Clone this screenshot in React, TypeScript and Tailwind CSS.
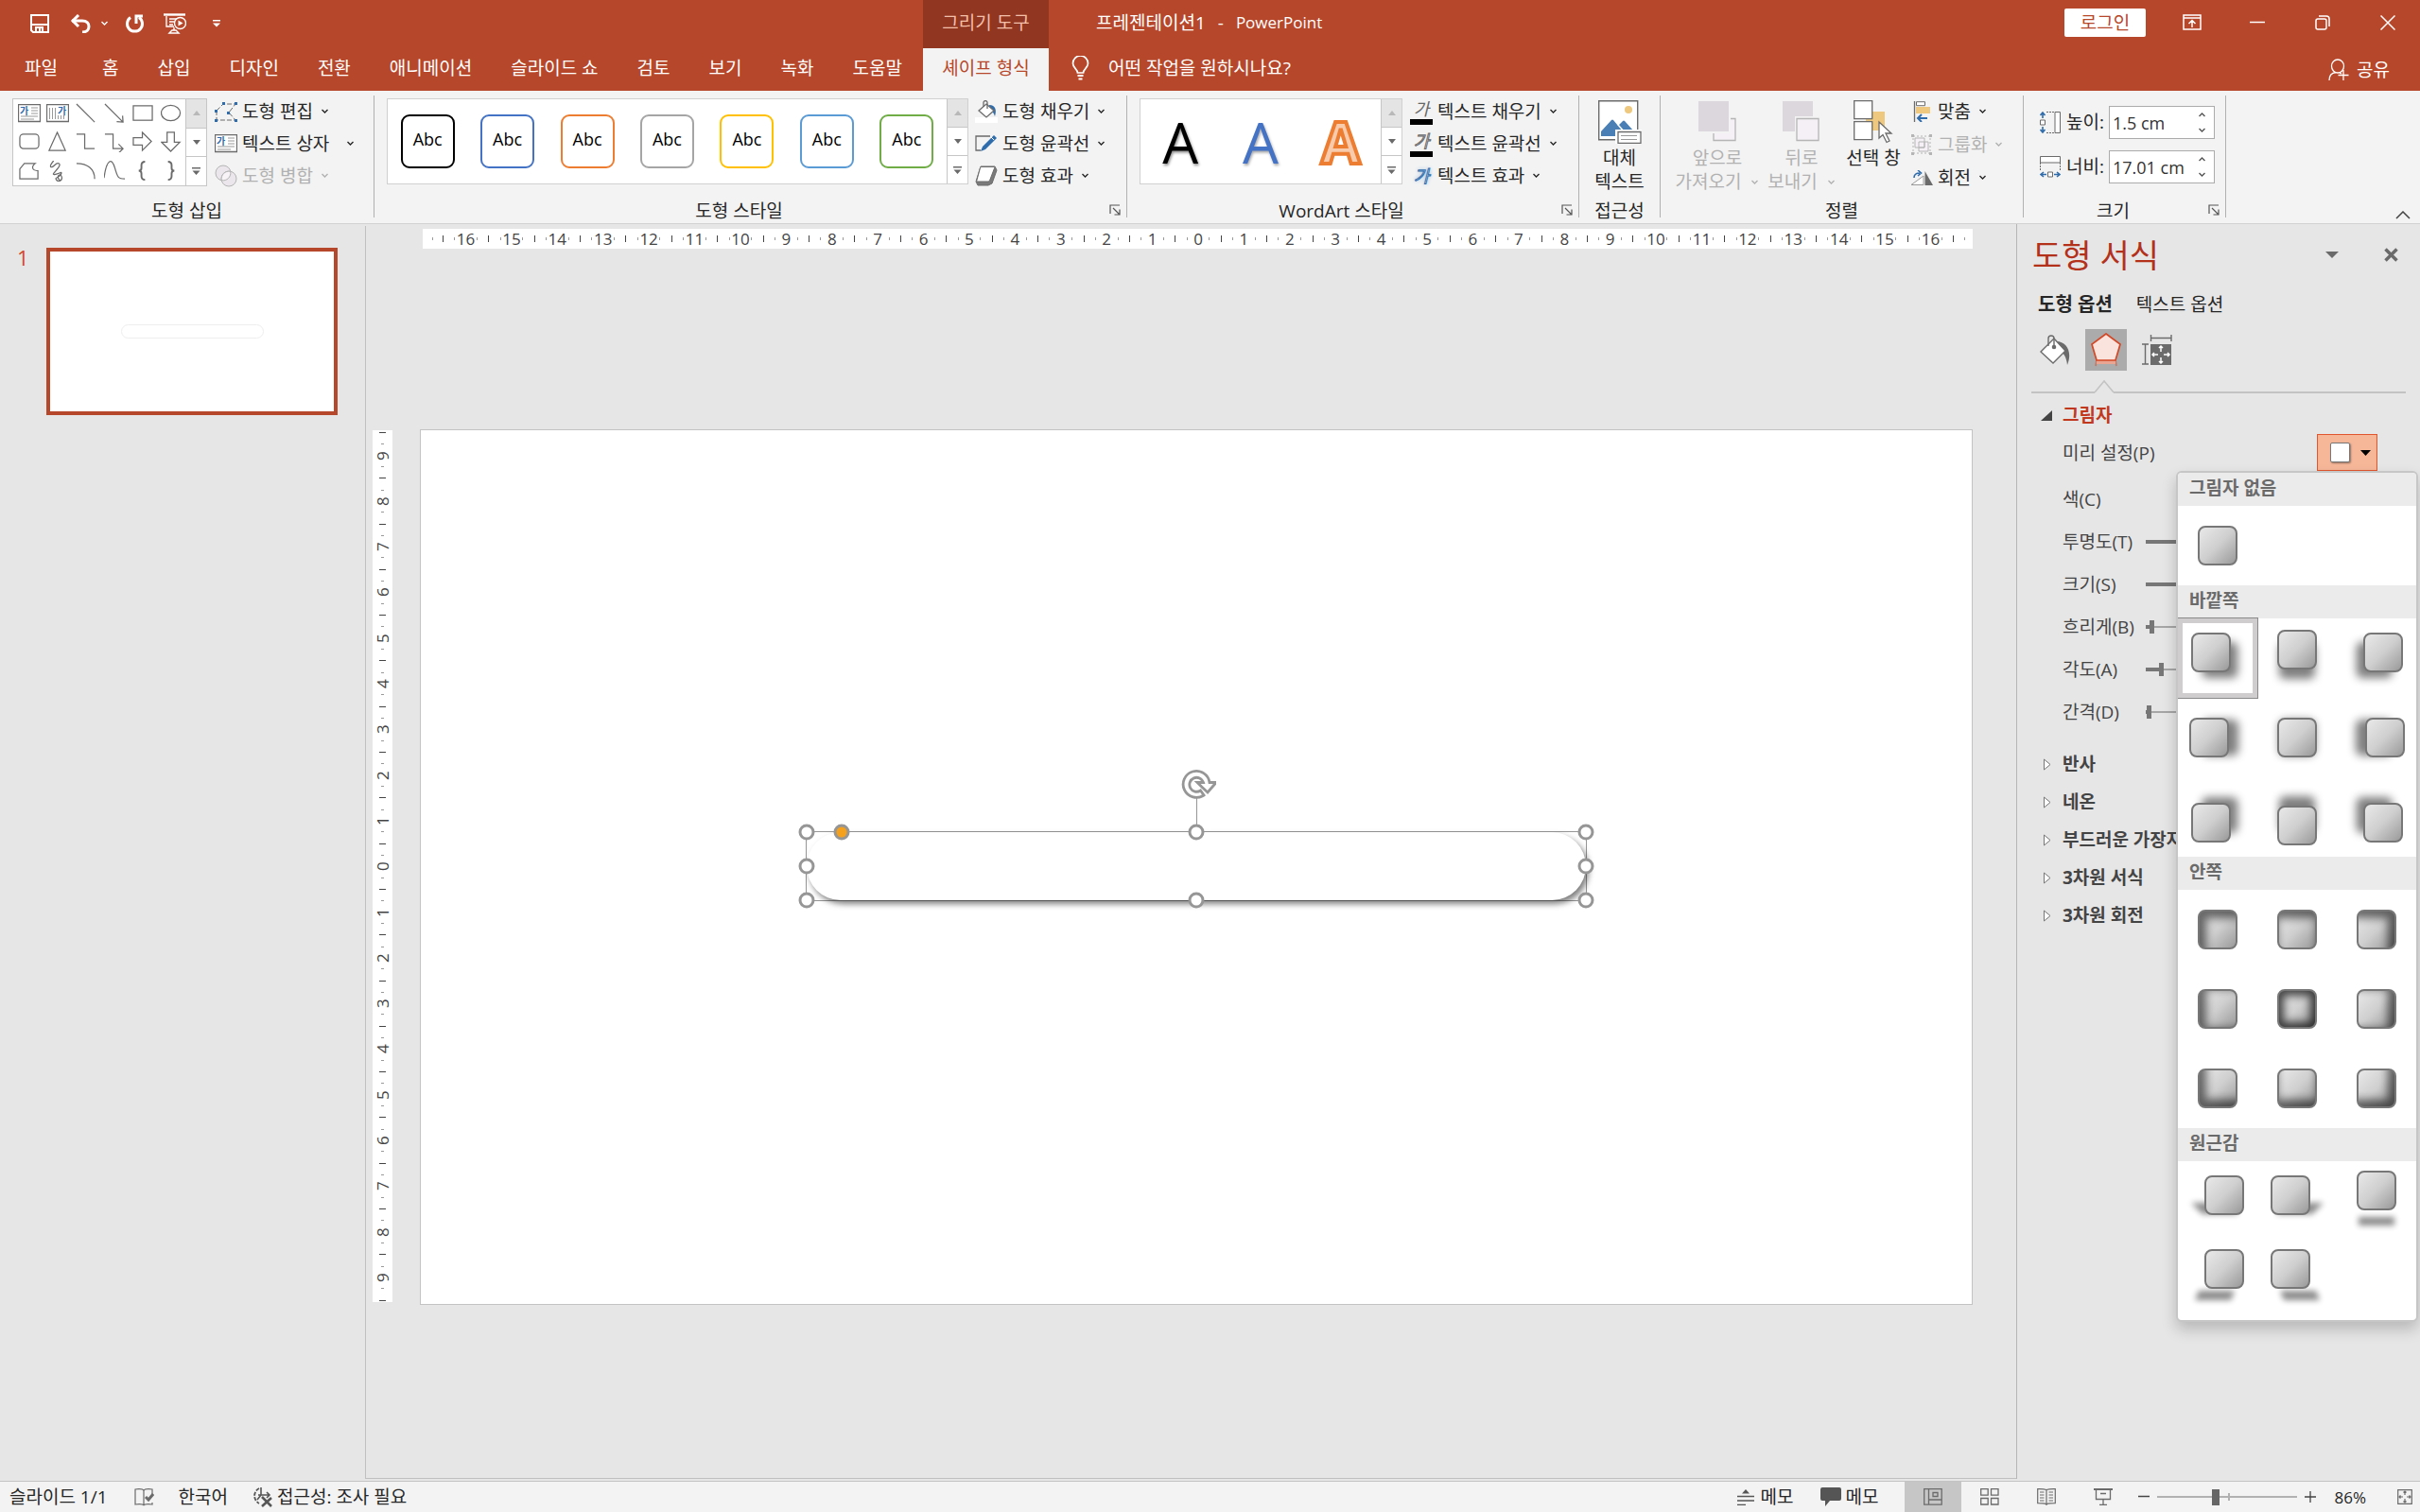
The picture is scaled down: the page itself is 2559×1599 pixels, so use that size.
import type { ReactNode } from "react"
import clsx from "clsx"

const TABS = ["홈", "삽입", "디자인", "전환", "애니메이션", "슬라이드 쇼", "검토", "보기", "녹화", "도움말"]

const STYLE_BORDERS = [
    "border-black",
    "border-[#4472c4]",
    "border-[#ed7d31]",
    "border-[#a5a5a5]",
    "border-[#ffc000]",
    "border-[#5b9bd5]",
    "border-[#70ad47]",
]

function Chevron({ className }: { className?: string }) {
    return (
        <svg width="9" height="6" viewBox="0 0 9 6" className={clsx("shrink-0", className)} fill="none" stroke="currentColor" strokeWidth="1.4">
            <path d="M1.500 1l3 3 3-3" />
        </svg>
    )
}

/* ---------- Title bar ---------- */

function QuickAccess() {
    return (
        <div className="flex w-[976px] items-center pb-0.5 pl-8 text-white">
            <button aria-label="저장" className="mr-[22px]">
                <svg width="20" height="20" viewBox="0 0 20 20" fill="none" stroke="currentColor" strokeWidth="2">
                    <path d="M1 1h18v18H3l-2-2z" />
                    <path d="M1 11h18" />
                    <path d="M6 19v-5h7v5M10 15v4" />
                </svg>
            </button>
            <button aria-label="실행 취소" className="mr-2.5">
                <svg width="22" height="20" viewBox="0 0 22 20" fill="none" stroke="currentColor" strokeWidth="3">
                    <path d="M2 7h11c5 0 7 3 7 6s-2 6-7 6" />
                    <path d="M9 1L3 7l6 6" />
                </svg>
            </button>
            <button aria-label="실행 취소 목록" className="mr-[17px]">
                <Chevron />
            </button>
            <button aria-label="다시 실행" className="mr-5">
                <svg width="21" height="20" viewBox="0 0 21 20" fill="none" stroke="currentColor" strokeWidth="3">
                    <path d="M6 3.500a8 8 0 1 0 9 0" />
                    <path d="M12 10V2h7" />
                </svg>
            </button>
            <button aria-label="슬라이드 쇼" className="mr-7">
                <svg width="24" height="22" viewBox="0 0 24 22" fill="none" stroke="currentColor" strokeWidth="1.4">
                    <path d="M0 1.500h23" strokeWidth="2.4" />
                    <path d="M3 3v11h8M6 6h8M6 9h5M6 12h4M11 15v3M6 21l3-3h4l3 3z" />
                    <circle cx="17.500" cy="10.500" r="6" />
                    <path d="M15.500 7.500l5 3-5 3z" fill="currentColor" stroke="none" />
                </svg>
            </button>
            <button aria-label="빠른 실행 도구 모음 사용자 지정">
                <svg width="8" height="8" viewBox="0 0 8 8" fill="currentColor">
                    <path d="M0 0h8v1.500H0zM0 3.500h8L4 7.500z" />
                </svg>
            </button>
        </div>
    )
}

function TitleBar() {
    return (
        <header className="flex h-[51px] text-[19px] leading-6 text-white">
            <QuickAccess />
            <div className="flex w-[133px] items-center justify-center bg-[#903621] pb-1 text-[#f4bfa9]">그리기 도구</div>
            <div className="flex items-center gap-[13px] pb-1 pl-[50px]">
                <span>프레젠테이션1</span>
                <span>-</span>
                <span className="text-[17px]">PowerPoint</span>
            </div>
            <div className="ml-auto flex items-center pb-1">
                <button className="mr-[14px] h-[30px] w-[86px] rounded-xs bg-white text-[#b7472a]">로그인</button>
                <button aria-label="리본 메뉴 표시 옵션" className="flex w-[69px] justify-center">
                    <svg width="20" height="17" viewBox="0 0 20 17" fill="none" stroke="currentColor" strokeWidth="1.5">
                        <path d="M1 1h18v15H1zM1 4h18M10 14V7M6.500 10L10 6.500l3.500 3.500" />
                    </svg>
                </button>
                <button aria-label="최소화" className="flex w-[69px] justify-center">
                    <svg width="16" height="16" viewBox="0 0 16 16" stroke="currentColor" strokeWidth="1.500">
                        <path d="M0 7.500h16" />
                    </svg>
                </button>
                <button aria-label="이전 크기로 복원" className="flex w-[69px] justify-center">
                    <svg width="16" height="16" viewBox="0 0 16 16" fill="none" stroke="currentColor" strokeWidth="1.500">
                        <rect x="1" y="4" width="11" height="11" rx="2" />
                        <path d="M4 1h8a3 3 0 0 1 3 3v8" />
                    </svg>
                </button>
                <button aria-label="닫기" className="flex w-[69px] justify-center">
                    <svg width="16" height="16" viewBox="0 0 16 16" stroke="currentColor" strokeWidth="1.500">
                        <path d="M.500.500l15 15M15.500.500l-15 15" />
                    </svg>
                </button>
            </div>
        </header>
    )
}

function TabRow() {
    return (
        <nav className="flex h-[45px] text-[19px] leading-6 text-white">
            <div className="flex w-[976px] gap-px">
                <button className="px-[26px] pb-[3px]">파일</button>
                {TABS.map((tab) => (
                    <button key={tab} className="px-5 pb-[3px] whitespace-nowrap">
                        {tab}
                    </button>
                ))}
            </div>
            <button className="w-[133px] bg-[#f3f3f3] pb-[3px] text-[#b7472a]">셰이프 형식</button>
            <button className="ml-6 flex items-center gap-5 pb-[3px]">
                <svg width="19" height="26" viewBox="0 0 19 26" fill="none" stroke="currentColor" strokeWidth="1.700">
                    <path d="M6.500 18c0-4-5-5-5-10a8 8 0 0 1 16 0c0 5-5 6-5 10z" />
                    <path d="M6.500 21h6M7.500 24.500h4" strokeWidth="2" />
                </svg>
                어떤 작업을 원하시나요?
            </button>
            <button className="mr-8 ml-auto flex items-center gap-2">
                <svg width="22" height="24" viewBox="0 0 22 24" fill="none" stroke="currentColor" strokeWidth="1.300">
                    <ellipse cx="10" cy="8" rx="6.500" ry="7" />
                    <path d="M1 23c0-5 3-8 7-8.500M12 15l2 1M16 12v11M10.500 17.500h11" />
                </svg>
                공유
            </button>
        </nav>
    )
}

/* ---------- Ribbon ---------- */

function Group({ label, launcher, className, inset, children }: { label: string; launcher?: boolean; className: string; inset?: string; children: ReactNode }) {
    return (
        <>
            <section className={clsx("flex shrink-0 flex-col", className)}>
                <div className={clsx("flex flex-1 pt-1", inset)}>{children}</div>
                <div className="flex h-7 items-center text-[19px] leading-6">
                    <h2 className="flex-1 pt-0.5 text-center">{label}</h2>
                    {launcher && (
                        <button aria-label={`${label} 옵션`} className="w-6 pl-1.5">
                            <svg width="12" height="12" viewBox="0 0 12 12" fill="none" stroke="#555" strokeWidth="1.200">
                                <path d="M1 10V1h10M4 4l7 7M11 5.500V11H5.500" />
                            </svg>
                        </button>
                    )}
                </div>
            </section>
            <div className="mt-[5px] mb-[6px] w-px shrink-0 bg-[#b1b1b1]" />
        </>
    )
}

function GalleryScroll() {
    return (
        <div className="flex w-[22px] flex-col divide-y divide-[#c6c6c6] border-l border-[#c6c6c6] text-[#6a6a6a]">
            <button aria-label="위로" className="flex flex-1 items-center justify-center bg-[#e4e4e4] text-[#b8b8b8]">
                <svg width="8" height="5" viewBox="0 0 8 5" fill="currentColor"><path d="M0 5l4-5 4 5z" /></svg>
            </button>
            <button aria-label="아래로" className="flex flex-1 items-center justify-center">
                <svg width="8" height="5" viewBox="0 0 8 5" fill="currentColor"><path d="M0 0h8L4 5z" /></svg>
            </button>
            <button aria-label="자세히" className="flex flex-1 items-center justify-center">
                <svg width="9" height="8" viewBox="0 0 9 8" fill="currentColor"><path d="M0 0h9v1.500H0zM.500 3.500h8l-4 4.500z" /></svg>
            </button>
        </div>
    )
}

function RibbonRow({ icon, label, disabled, gap }: { icon: ReactNode; label: string; disabled?: boolean; gap?: string }) {
    return (
        <button disabled={disabled} className={clsx("flex h-[34px] items-center text-[19px] leading-6 whitespace-nowrap", disabled && "text-[#b1b1b1]")}>
            <span className="mr-[5px] flex w-6 justify-center">{icon}</span>
            {label}
            <Chevron className={gap ?? "ml-2"} />
        </button>
    )
}

const g = "#6b6b6b"

function TextBoxIcon({ vertical }: { vertical?: boolean }) {
    return (
        <svg width="24" height="20" viewBox="0 0 24 20" fill="none" stroke={g}>
            <path d="M.500.500h23v18H.500z" fill="#fff" strokeWidth="1.300" />
            {vertical ? (
                <path d="M3.500 4v12M6.500 4v12M9.500 4v12M12.500 12v4M15.500 12v4M18.500 12v4" stroke="#999" />
            ) : (
                <path d="M14 4h7M14 7h7M14 10h7M3 13h18M3 16h14" stroke="#999" />
            )}
            <text x={vertical ? 12 : 2} y="11" fontSize="10" fontWeight="700" fill="#2f6cab" stroke="none">
                가
            </text>
        </svg>
    )
}

const SHAPES: ReactNode[] = [
    <path d="M1 1l20 20" />,
    <path d="M1 1l20 20M14 20.500l7 .500-.500-7" />,
    <rect x="1" y="3" width="21" height="16" />,
    <ellipse cx="11" cy="11" rx="10.500" ry="8.500" />,
    <rect x="1" y="3" width="21" height="16" rx="4" />,
    <path d="M11 1L2 21h18z" />,
    <path d="M1 3h9v16h11" />,
    <path d="M1 3h9v16h11M16 14l5 5-5 5" />,
    <path d="M1 7h10V1l10 10-10 10v-6H1z" />,
    <path d="M7 1h8v11h6L11 22 1 12h6z" />,
    <path d="M6 3h12c-5 4-3 8 3 8v9H1V9z" />,
    <path d="M7 0C1 7 4 9 8 5s8-2 4 3-8 8-3 7 8-4 6 0-7 3-5 6 7 1 6-3-5-2-4 1 2 3 3 3" />,
    <path d="M1 3c12 0 20 6 20 17" />,
    <path d="M0 19C3-3 9-3 12 8s4 12 11 12" />,
    <path d="M14 1q-4 0-4 4v3q0 3-3 3 3 0 3 3v3q0 4 4 4" strokeWidth="2" />,
    <path d="M8 1q4 0 4 4v3q0 3 3 3-3 0-3 3v3q0 4-4 4" strokeWidth="2" />,
]

function ShapesGroup() {
    return (
        <Group label="도형 삽입" className="w-[395px]" inset="pl-[13px]">
            <div className="mt-1 mr-2 flex h-[93px] w-[206px] border border-[#c6c6c6] bg-white">
                <div className="grid flex-1 grid-cols-6 place-items-center pl-0.5">
                    <button aria-label="텍스트 상자"><TextBoxIcon /></button>
                    <button aria-label="세로 텍스트 상자"><TextBoxIcon vertical /></button>
                    {SHAPES.map((shape, i) => (
                        <button key={i} aria-label={`도형 ${i + 1}`}>
                            <svg width="22" height="22" viewBox="0 0 23 23" fill="none" stroke={g} strokeWidth="1.300">
                                {shape}
                            </svg>
                        </button>
                    ))}
                </div>
                <GalleryScroll />
            </div>
            <div className="flex flex-col items-start pt-px">
                <RibbonRow
                    label="도형 편집"
                    icon={
                        <svg width="24" height="21" viewBox="0 0 24 21" fill="none">
                            <path d="M2 9l7-7h13l-7 9 7 8H2z" stroke={g} strokeDasharray="5 2" />
                            <path d="M8 0h3v3H8zM21 0h3v3h-3zM0 8h3v3H0zM13 10h3v3h-3zM0 18h3v3H0zM21 18h3v3h-3z" fill="#2f6cab" />
                        </svg>
                    }
                />
                <RibbonRow label="텍스트 상자" gap="ml-[18px]" icon={<TextBoxIcon />} />
                <RibbonRow
                    disabled
                    label="도형 병합"
                    icon={
                        <svg width="24" height="24" viewBox="0 0 24 24" fill="#ebe6eb" stroke="#b5b5b5">
                            <circle cx="9" cy="9" r="8" />
                            <circle cx="15" cy="15" r="8" />
                            <path d="M7.300 16.700A8 8 0 0 1 16.700 7.300 8 8 0 0 1 7.300 16.700z" fill="#f7f3f7" />
                        </svg>
                    }
                />
            </div>
        </Group>
    )
}

function ShapeStylesGroup() {
    return (
        <Group label="도형 스타일" launcher className="w-[795px]" inset="pl-[13px]">
            <div className="mt-1 mr-[7px] flex h-[91px] w-[615px] border border-[#d0d0d0] bg-white">
                <div className="grid flex-1 grid-cols-7 place-items-center">
                    {STYLE_BORDERS.map((border) => (
                        <button key={border} className={clsx("h-[57px] w-[57px] rounded-[9px] border-2 pb-1 text-[18px] text-black", border)}>
                            Abc
                        </button>
                    ))}
                </div>
                <GalleryScroll />
            </div>
            <div className="flex flex-col items-start pt-px">
                <RibbonRow
                    label="도형 채우기"
                    icon={
                        <svg width="24" height="24" viewBox="0 0 24 24">
                            <path d="M0 18h24v6H0z" fill="#fff" />
                            <path d="M15 5c7 0 8 6 6 12-1-4-3-5-5-6z" fill="#2f6cab" />
                            <path d="M12 4l8 7-8 7-8-7z" fill="#fff" stroke={g} strokeWidth="1.300" />
                            <path d="M9 7V2q2-3 4 0v7" fill="none" stroke={g} strokeWidth="1.300" />
                        </svg>
                    }
                />
                <RibbonRow
                    label="도형 윤곽선"
                    icon={
                        <svg width="24" height="20" viewBox="0 0 24 20" fill="none">
                            <path d="M16 2H1v15h5" stroke={g} strokeWidth="1.300" />
                            <path d="M20 1l3 3L11 16l-5 2 2-5z" fill="#2f6cab" />
                            <path d="M17 3l3 3" stroke="#fff" />
                        </svg>
                    }
                />
                <RibbonRow
                    label="도형 효과"
                    icon={
                        <svg width="24" height="22" viewBox="0 0 24 22" stroke={g}>
                            <path d="M6 1h15l2 4-5 14-4 2H3l-2-4z" fill="#7a7a7a" strokeLinejoin="round" />
                            <path d="M7 1.500h13q1 0 .700 1L15.500 16q-.500 1-1.500 1H2.500q-1 0-.700-1L5.500 2.500q.500-1 1.500-1z" fill="#fff" />
                        </svg>
                    }
                />
            </div>
        </Group>
    )
}

function TextGlyph({ className, bar }: { className: string; bar?: boolean }) {
    return (
        <span className="flex w-6 flex-col items-center">
            <span className={clsx("text-[18px] leading-[22px] italic", className)}>가</span>
            {bar && <span className="h-1.5 w-6 bg-black" />}
        </span>
    )
}

function WordArtGroup() {
    return (
        <Group label="WordArt 스타일" launcher className="w-[477px]" inset="pl-[13px]">
            <div className="mt-1 mr-2 flex h-[91px] w-[278px] border border-[#d0d0d0] bg-white">
                <div className="grid flex-1 grid-cols-3 place-items-center text-[60px] leading-[80px]">
                    <button className="font-medium text-black [text-shadow:1px_2px_3px_rgba(0,0,0,0.45)]">A</button>
                    <button className="font-medium text-[#4472c4] [text-shadow:1px_2px_3px_rgba(0,0,0,0.35)]">A</button>
                    <button className="font-bold text-[#f8cbad] [-webkit-text-stroke:4px_#ed7d31]">A</button>
                </div>
                <GalleryScroll />
            </div>
            <div className="flex flex-col items-start pt-px">
                <RibbonRow label="텍스트 채우기" icon={<TextGlyph bar className="text-[#666]" />} />
                <RibbonRow label="텍스트 윤곽선" icon={<TextGlyph bar className="text-white [-webkit-text-stroke:1px_#666]" />} />
                <RibbonRow label="텍스트 효과" icon={<TextGlyph className="text-white [-webkit-text-stroke:1px_#2f6cab] [text-shadow:0_0_4px_#5b9bd5]" />} />
            </div>
        </Group>
    )
}

function BigButton({ icon, lines, disabled, menu, className }: { icon: ReactNode; lines: string[]; disabled?: boolean; menu?: boolean; className: string }) {
    return (
        <button disabled={disabled} className={clsx("flex flex-col items-center self-start pt-1.5 text-[19px] leading-[25px] whitespace-nowrap", className, disabled && "text-[#b1b1b1]")}>
            <span className="mb-[3px] flex h-[46px]">{icon}</span>
            <span>{lines[0]}</span>
            {lines[1] && (
                <span className="flex items-center">
                    {lines[1]}
                    {menu && <Chevron className="ml-2.5" />}
                </span>
            )}
        </button>
    )
}

function AccessibilityGroup() {
    return (
        <Group label="접근성" className="w-[85px]">
            <BigButton
                className="w-full"
                lines={["대체", "텍스트"]}
                icon={
                    <svg width="46" height="46" viewBox="0 0 46 46">
                        <path d="M.700.700h41v41h-41z" fill="#fff" stroke={g} strokeWidth="1.400" />
                        <circle cx="32" cy="10" r="4" fill="#edc87e" />
                        <path d="M3 38v-5l11-12q1-1 2 0l5 6 5-5q1-1 2 0l9 10v6z" fill="#4a7fb5" />
                        <path d="M21 26l7 8" stroke="#fff" strokeWidth="1.500" />
                        <path d="M20 33h25v12H20z" fill="#fff" stroke="#fff" strokeWidth="4" />
                        <path d="M21 33.500h24v12H21z" fill="#fff" stroke={g} strokeWidth="1.300" />
                        <path d="M24 37.500h17M24 41.500h17" stroke="#999" />
                    </svg>
                }
            />
        </Group>
    )
}

function ArrangeGroup() {
    return (
        <Group label="정렬" className="w-[383px]" inset="pl-3">
            <BigButton
                disabled
                menu
                className="w-24"
                lines={["앞으로", "가져오기"]}
                icon={
                    <svg width="40" height="44" viewBox="0 0 40 44">
                        <path d="M16 19.500h23v23H16z" fill="#f5f0f5" stroke="#b5b5b5" strokeWidth="1.300" />
                        <path d="M0 1h34v34H0z" fill="#f3f3f3" />
                        <path d="M0 1h32v32H0z" fill="#dcd7dc" />
                    </svg>
                }
            />
            <BigButton
                disabled
                menu
                className="w-[82px]"
                lines={["뒤로", "보내기"]}
                icon={
                    <svg width="40" height="44" viewBox="0 0 40 44">
                        <path d="M0 1h32v32H0z" fill="#dcd7dc" />
                        <path d="M13 17h27v27H13z" fill="#f3f3f3" />
                        <path d="M15 19.500h23v23H15z" fill="#f5f0f5" stroke="#b5b5b5" strokeWidth="1.300" />
                    </svg>
                }
            />
            <BigButton
                className="mr-1 w-[70px]"
                lines={["선택 창"]}
                icon={
                    <svg width="42" height="46" viewBox="0 0 42 46" strokeWidth="1.300">
                        <path d="M13 12h20v20H13z" fill="#edc87e" />
                        <path d="M.700.700h19v19h-19zM.700 22.700h19v19h-19z" fill="#fff" stroke={g} />
                        <path d="M27 23v17l4-3.500 4 8 3-1.500-4-8h6z" fill="#fff" stroke={g} />
                    </svg>
                }
            />
            <div className="flex flex-col items-start gap-px pt-px">
                <RibbonRow
                    label="맞춤"
                    icon={
                        <svg width="18" height="22" viewBox="0 0 18 22" fill="none">
                            <path d="M1.500 0v22" stroke={g} strokeWidth="1.300" />
                            <path d="M3.500.700h9v4h-9z" fill="#fff" stroke={g} />
                            <path d="M3 6h15v7H3z" fill="#edc87e" />
                            <path d="M15 18H5M9 14l-4 4 4 4" stroke="#2f6cab" strokeWidth="2" />
                        </svg>
                    }
                />
                <RibbonRow
                    disabled
                    label="그룹화"
                    icon={
                        <svg width="22" height="22" viewBox="0 0 22 22" fill="none" stroke="#b5b5b5">
                            <path d="M2 2h18v18H2z" strokeDasharray="2 2" />
                            <path d="M4 4h10v10H4zM8 8h10v10H8z" fill="#f5f0f5" />
                            <path d="M8 14h6V8" />
                            <path d="M0 0h3v3H0zM19 0h3v3h-3zM0 19h3v3H0zM19 19h3v3h-3z" fill="#b5b5b5" stroke="none" />
                        </svg>
                    }
                />
                <RibbonRow
                    label="회전"
                    icon={
                        <svg width="24" height="17" viewBox="0 0 24 17" fill="none">
                            <path d="M1 15.500h13V6z" fill="#fff" stroke="#999" />
                            <path d="M15.500 1v15H24z" fill="#6b6b6b" />
                            <path d="M4 8q0-5 6-5M8 0l3.500 3L8 6" stroke="#2f6cab" strokeWidth="1.600" />
                        </svg>
                    }
                />
            </div>
        </Group>
    )
}

function SizeField({ id, label, value, icon }: { id: string; label: string; value: string; icon: ReactNode }) {
    return (
        <div className="flex h-[35px] items-center">
            <span className="mr-1.5 w-[22px]">{icon}</span>
            <label htmlFor={id} className="w-[45px] text-[19px] whitespace-nowrap">
                {label}
            </label>
            <div className="flex h-full w-28 border border-[#ababab] bg-white">
                <input id={id} defaultValue={value} className="w-0 flex-1 pt-0.5 pl-[3px] text-[18px] text-[#333] outline-none" />
                <div className="flex w-[26px] flex-col items-center justify-around text-[#555]">
                    <button aria-label={`${label} 늘리기`}><Chevron className="rotate-180" /></button>
                    <button aria-label={`${label} 줄이기`}><Chevron /></button>
                </div>
            </div>
        </div>
    )
}

function SizeGroup() {
    return (
        <Group label="크기" launcher className="w-[213px]">
            <div className="flex flex-col gap-3 pt-3 pl-[17px]">
                <SizeField
                    id="height"
                    label="높이:"
                    value="1.5 cm"
                    icon={
                        <svg width="22" height="23" viewBox="0 0 22 23" fill="none" stroke={g}>
                            <path d="M16 .500h5.500v22H16z" fill="#fff" />
                            <path d="M7 .500h9M7 22.500h9" strokeDasharray="2 1" />
                            <path d="M.500 9h5v5h-5z" fill="#fff" />
                            <path d="M3 7V2M.500 4L3 1l2.500 3M3 16v5M.500 19L3 22l2.500-3" stroke="#2f6cab" strokeWidth="1.600" />
                        </svg>
                    }
                />
                <SizeField
                    id="width"
                    label="너비:"
                    value="17.01 cm"
                    icon={
                        <svg width="22" height="23" viewBox="0 0 22 23" fill="none" stroke={g}>
                            <path d="M.500.500h21V7H.500z" fill="#fff" />
                            <path d="M.500 7v9M21.500 7v9" strokeDasharray="2 1" />
                            <path d="M8.500 17h5v5h-5z" fill="#fff" />
                            <path d="M7 19.500H2M4 17l-3 2.500L4 22M15 19.500h5M18 17l3 2.500-3 2.500" stroke="#2f6cab" strokeWidth="1.600" />
                        </svg>
                    }
                />
            </div>
        </Group>
    )
}

function Ribbon() {
    return (
        <div className="flex h-[141px] border-b border-[#d2d2d2] bg-[#f3f3f3] text-[#262626]">
            <ShapesGroup />
            <ShapeStylesGroup />
            <WordArtGroup />
            <AccessibilityGroup />
            <ArrangeGroup />
            <SizeGroup />
            <button aria-label="리본 메뉴 축소" className="mr-2.5 mb-1 ml-auto self-end">
                <svg width="16" height="9" viewBox="0 0 16 9" fill="none" stroke="#444" strokeWidth="1.500">
                    <path d="M1 8l7-7 7 7" />
                </svg>
            </button>
        </div>
    )
}

/* ---------- Slide area ---------- */

function Ruler({ max, vertical }: { max: number; vertical?: boolean }) {
    const numbers = Array.from({ length: max * 2 + 1 }, (_, i) => Math.abs(i - max))
    const dark = vertical ? "h-px w-[7px] bg-[#444]" : "h-[7px] w-px bg-[#444]"
    const light = vertical ? "h-px w-[3px] bg-[#999]" : "h-[3px] w-px bg-[#999]"
    return (
        <div className={clsx("flex bg-white text-[17px] leading-5 text-[#444]", vertical ? "w-[21px] flex-col" : "h-[21px]")}>
            <div className={clsx("flex basis-0 items-center justify-center", vertical ? "grow-[4]" : "grow-[43]")}>
                {!vertical && <span className={light} />}
            </div>
            {numbers.map((n, i) => (
                <div key={i} className={clsx("flex grow-[100] basis-0 items-center justify-between", vertical && "flex-col")}>
                    <span className={dark} />
                    <span className={light} />
                    {vertical ? (
                        <span className="-my-2.5 h-5 w-5 -rotate-90 text-center">{n}</span>
                    ) : (
                        <span className="-mx-2.5 w-5 text-center">{n}</span>
                    )}
                    <span className={light} />
                    <span />
                </div>
            ))}
            <div className={clsx("flex basis-0 items-center", vertical ? "grow-[4] flex-col" : "grow-[43]")}>
                <span className={dark} />
                {!vertical && <span className={clsx("ml-[11px]", light)} />}
            </div>
        </div>
    )
}

const HANDLES = [
    "top-0 left-0",
    "top-0 left-1/2",
    "top-0 left-full",
    "top-1/2 left-0",
    "top-1/2 left-full",
    "top-full left-0",
    "top-full left-1/2",
    "top-full left-full",
]

function SelectedShape() {
    return (
        <div className="relative h-[74px] w-[826px] border border-[#969696]">
            <div className="h-full rounded-full bg-white shadow-[3px_4px_6px_rgba(0,0,0,0.5)]" />
            <div className="absolute -top-9 left-1/2 h-9 w-px bg-[#969696]" />
            {HANDLES.map((pos) => (
                <span key={pos} className={clsx("absolute h-[17px] w-[17px] -translate-1/2 rounded-full border-3 border-[#969696] bg-white", pos)} />
            ))}
            <span className="absolute top-0 left-[37px] h-[17px] w-[17px] -translate-1/2 rounded-full border-3 border-[#969696] bg-[#f5a11e]" />
            <svg width="42" height="34" viewBox="0 0 42 34" className="absolute -top-[67px] left-1/2 -translate-x-1/2" fill="none" stroke="#969696">
                <path d="M29 28A14 14 0 1 1 35 14.500h7L33 25 22 14.500h6.500a7.500 7.500 0 1 0-3 8.500z" fill="#fff" strokeWidth="2.800" />
            </svg>
        </div>
    )
}

function Canvas() {
    return (
        <main className="flex min-w-0 flex-1 flex-col border-b border-[#c0c0c0] pt-[5px] pr-[46px] pl-[7px]">
            <div className="pl-[53px]">
                <Ruler max={16} />
            </div>
            <div className="mt-[191px] flex">
                <div className="mr-[29px] flex pt-px pb-[3px]">
                    <Ruler max={9} vertical />
                </div>
                <div className="flex aspect-[1641/925] flex-1 items-center justify-center border border-[#c3c3c3] bg-white pb-0.5">
                    <SelectedShape />
                </div>
            </div>
        </main>
    )
}

function Thumbnails() {
    return (
        <aside className="flex w-[386px] items-start pt-[25px] pl-[18px]">
            <span className="w-[31px] text-[22px] leading-5 text-[#d24726]">1</span>
            <button aria-label="슬라이드 1" className="flex h-[177px] w-[308px] items-center justify-center border-4 border-[#b7472a] bg-white">
                <span className="h-[15px] w-[151px] rounded-full border border-[#eee]" />
            </button>
        </aside>
    )
}

/* ---------- Format pane ---------- */

type Cast = "none" | "outer" | "inner" | "perspective"

interface Preset {
    cast: Cast
    dx: number
    dy: number
    shadow?: ReactNode
}

const STEPS = [-1, 0, 1]

// straight neighbours shift further than the diagonal ones
const OUTER: Preset[] = STEPS.flatMap((y) =>
    STEPS.map((x) => ({ cast: "outer" as Cast, dx: x * (y === 0 ? 9 : 7), dy: y * (x === 0 ? 9 : 6) }))
)

const INNER: Preset[] = STEPS.flatMap((y) => STEPS.map((x) => ({ cast: "inner" as Cast, dx: -x * 9, dy: -y * 9 })))

const PERSPECTIVE: Preset[] = [
    { cast: "perspective", dx: 7, dy: -6, shadow: <path d="M14 44h42l8 12H26z" /> },
    { cast: "perspective", dx: -7, dy: -6, shadow: <path d="M28 44h42l-12 12H20z" /> },
    { cast: "perspective", dx: 0, dy: -11, shadow: <rect x="23" y="59" width="38" height="9" /> },
    { cast: "perspective", dx: 7, dy: -12, shadow: <path d="M22 53h38l-4 10H18z" /> },
    { cast: "perspective", dx: -7, dy: -12, shadow: <path d="M24 53h38l4 10H28z" /> },
]

function PresetIcon({ cast, dx, dy, shadow }: Preset) {
    const inner = cast === "inner"
    const centred = dx === 0 && dy === 0
    const x = inner ? 22 : 22 + dx
    const y = inner ? 22 : 22 + dy
    return (
        <svg width="84" height="84" viewBox="0 0 84 84">
            {cast === "outer" && <rect x={23 - dx / 3} y={23 - dy / 3} width="38" height="38" rx="6" fill="#000" opacity="0.5" filter="url(#soft)" />}
            {shadow && (
                <g opacity="0.45" filter="url(#softer)">
                    {shadow}
                </g>
            )}
            <rect x={x} y={y} width="40" height="40" rx="7" fill="url(#tile)" />
            {inner && (
                <g clipPath="url(#tile-clip)">
                    <path
                        d={centred ? "M-20-20H104V104H-20zM28 28V56H56V28z" : "M-20-20H104V104H-20zM21 21V63H63V21z"}
                        transform={`translate(${dx} ${dy})`}
                        fillRule="evenodd"
                        opacity={centred ? 0.7 : 0.55}
                        filter="url(#soft-in)"
                    />
                </g>
            )}
            <rect x={x} y={y} width="40" height="40" rx="7" fill="none" stroke="#777" strokeWidth="2" />
        </svg>
    )
}

function PresetSection({ title, presets, selected }: { title: string; presets: Preset[]; selected?: number }) {
    return (
        <section>
            <h3 className="bg-[#ebebeb] pb-[3px] pl-3 text-[19px] leading-8 font-bold text-[#6a6a6a]">{title}</h3>
            <div className="grid grid-cols-3">
                {presets.map((preset, i) => (
                    <button
                        key={i}
                        aria-label={`${title} ${i + 1}`}
                        className={clsx("flex h-[84px] items-center justify-center overflow-hidden", i === selected && "border-[5px] border-[#cfcdcd] outline outline-[#8a8a8a]")}
                    >
                        <span className="flex shrink-0">
                            <PresetIcon {...preset} />
                        </span>
                    </button>
                ))}
            </div>
        </section>
    )
}

function PresetMenu() {
    return (
        <div className="absolute top-[39px] right-0.5 w-[256px] overflow-hidden rounded-md border-2 border-[#c6c6c6] bg-white shadow-[0_8px_16px_rgba(0,0,0,0.2)]">
            <svg width="0" height="0" className="absolute">
                <defs>
                    <linearGradient id="tile" x1="0" y1="0" x2="1" y2="1">
                        <stop offset="0" stopColor="#eaeaea" />
                        <stop offset="0.5" stopColor="#cfcfcf" />
                        <stop offset="1" stopColor="#979797" />
                    </linearGradient>
                    <clipPath id="tile-clip">
                        <rect x="22" y="22" width="40" height="40" rx="7" />
                    </clipPath>
                    <filter id="soft" x="-50%" y="-50%" width="200%" height="200%">
                        <feGaussianBlur stdDeviation="5" />
                    </filter>
                    <filter id="softer" x="-50%" y="-100%" width="200%" height="300%">
                        <feGaussianBlur stdDeviation="3" />
                    </filter>
                    <filter id="soft-in">
                        <feGaussianBlur stdDeviation="5" />
                    </filter>
                </defs>
            </svg>
            <PresetSection title="그림자 없음" presets={[{ cast: "none", dx: 0, dy: 0 }]} />
            <PresetSection title="바깥쪽" presets={OUTER} selected={0} />
            <PresetSection title="안쪽" presets={INNER} />
            <PresetSection title="원근감" presets={PERSPECTIVE} />
        </div>
    )
}

const SLIDERS = [
    { id: "opacity", label: "투명도(T)", value: 60, fill: "[background:linear-gradient(#777,#777)_0_50%/100%_4px_no-repeat]" },
    { id: "scale", label: "크기(S)", value: 100, fill: "[background:linear-gradient(#777,#777)_0_50%/100%_4px_no-repeat]" },
    { id: "blur", label: "흐리게(B)", value: 3, fill: "[background:linear-gradient(#777,#777)_0_50%/6px_4px_no-repeat,linear-gradient(#a6a6a6,#a6a6a6)_0_50%/100%_2px_no-repeat]" },
    { id: "angle", label: "각도(A)", value: 10, fill: "[background:linear-gradient(#777,#777)_0_50%/16px_4px_no-repeat,linear-gradient(#a6a6a6,#a6a6a6)_0_50%/100%_2px_no-repeat]" },
    { id: "distance", label: "간격(D)", value: 1, fill: "[background:linear-gradient(#777,#777)_0_50%/3px_4px_no-repeat,linear-gradient(#a6a6a6,#a6a6a6)_0_50%/100%_2px_no-repeat]" },
]

const SECTIONS = ["반사", "네온", "부드러운 가장자리", "3차원 서식", "3차원 회전"]

function FormatPane() {
    return (
        <aside className="flex w-[427px] shrink-0 flex-col border-l border-[#b5b5b5] text-[19px] leading-6 text-[#444]">
            <div className="flex h-[65px] items-center pr-[23px] pl-4">
                <h1 className="flex-1 text-[34px] leading-10 text-[#b3301b]">도형 서식</h1>
                <button aria-label="작업창 옵션" className="mr-12">
                    <svg width="14" height="7" viewBox="0 0 14 7" fill="#6a6a6a"><path d="M0 0h14L7 7z" /></svg>
                </button>
                <button aria-label="창 닫기">
                    <svg width="15" height="15" viewBox="0 0 15 15" stroke="#6a6a6a" strokeWidth="3.500"><path d="M1.500 1.500l12 12M13.500 1.500l-12 12" /></svg>
                </button>
            </div>
            <div className="flex h-10 items-center gap-[25px] pl-[22px] text-[20px] text-[#262626]">
                <button className="font-bold">도형 옵션</button>
                <button className="text-[19px]">텍스트 옵션</button>
            </div>
            <div className="mt-1.5 flex h-11 items-center pl-6">
                <button aria-label="채우기 및 선" className="mr-[15px]">
                    <svg width="33" height="32" viewBox="0 0 33 32" fill="none" stroke={g} strokeWidth="1.400">
                        <path d="M16 7c12-1 19 11 13 25-1-9-4-13-9-16z" fill="#6b6b6b" stroke="none" />
                        <path d="M15 4l12 13-13 13L1 18z" fill="#fff" />
                        <path d="M9 12V4q0-3 3-3t3 3v9" />
                        <circle cx="15" cy="13" r="1.600" fill="#6b6b6b" />
                    </svg>
                </button>
                <button aria-label="효과" className="mr-4 flex h-11 w-11 items-center justify-center bg-[#ababab]">
                    <svg width="32" height="36" viewBox="0 0 32 36" stroke="#d24726" strokeWidth="1.700">
                        <path d="M6 29l-1 6M26 29l1 6" strokeOpacity="0.5" />
                        <path d="M6 29h20v4H6z" fill="#e9a592" stroke="none" />
                        <path d="M16 1l15 11-5 17H6L1 12z" fill="#f9e3dc" />
                    </svg>
                </button>
                <button aria-label="크기 및 속성">
                    <svg width="32" height="32" viewBox="0 0 32 32" fill="none" stroke={g} strokeWidth="1.400">
                        <path d="M9.500 0v7M31 0v7M9.500 3.500H31M0 10h7M0 31h7M3.500 10v21" />
                        <path d="M9 10h22v22H9z" fill="#6b6b6b" stroke="none" />
                        <path d="M20 12v6M20 24v6M11 21h6M23 21h6M18 14l2-2 2 2M18 28l2 2 2-2M13 19l-2 2 2 2M27 19l2 2-2 2" stroke="#fff" strokeWidth="1.500" />
                    </svg>
                </button>
            </div>
            <div className="mt-[9px] mr-[15px] ml-[15px] flex items-end">
                <div className="h-0.5 w-[67px] bg-[#c3c3c3]" />
                <svg width="20" height="15" viewBox="0 0 20 15" fill="none" stroke="#c3c3c3" strokeWidth="1.500">
                    <path d="M0 14L10 2l10 12" />
                </svg>
                <div className="h-0.5 flex-1 bg-[#c3c3c3]" />
            </div>
            <button className="mt-[11px] flex h-6 items-center pl-[25px] font-bold text-[#c0391f]">
                <svg width="12" height="11" viewBox="0 0 12 11" fill="#444" className="mr-[11px]"><path d="M12 0v11H0z" /></svg>
                그림자
            </button>
            <div className="relative z-10 mt-2 flex h-[39px] items-center pr-[45px] pl-12">
                <span className="flex-1">미리 설정(P)</span>
                <button aria-label="미리 설정" className="flex h-[39px] w-16 items-center justify-center gap-[11px] border border-[#e0562f] bg-[#f6b799] pl-1.5">
                    <span className="h-[21px] w-[21px] rounded-xs border border-[#777] bg-white shadow-[1px_1px_2px_rgba(0,0,0,0.4)]" />
                    <svg width="11" height="6" viewBox="0 0 11 6"><path d="M0 0h11L5.500 6z" /></svg>
                </button>
                <PresetMenu />
            </div>
            <div className="mt-[7px] flex h-[45px] items-center pl-12">색(C)</div>
            {SLIDERS.map(({ id, label, value, fill }) => (
                <div key={id} className="flex h-[45px] items-center pl-12">
                    <label htmlFor={id} className="w-[88px]">
                        {label}
                    </label>
                    <input
                        id={id}
                        type="range"
                        defaultValue={value}
                        className={clsx("h-[14px] w-[140px] appearance-none [&::-webkit-slider-thumb]:h-[14px] [&::-webkit-slider-thumb]:w-[5px] [&::-webkit-slider-thumb]:appearance-none [&::-webkit-slider-thumb]:bg-[#777]", fill)}
                    />
                </div>
            ))}
            <div className="mt-[13px]">
                {SECTIONS.map((title) => (
                    <button key={title} className="flex h-10 items-center pl-7 font-bold">
                        <svg width="8" height="13" viewBox="0 0 8 13" fill="#fff" stroke="#777" className="mr-3"><path d="M.500 1v11L7 6.500z" /></svg>
                        {title}
                    </button>
                ))}
            </div>
        </aside>
    )
}

/* ---------- Status bar ---------- */

function StatusBar() {
    return (
        <footer className="flex h-[33px] items-center border-t border-[#c3c3c3] bg-[#f3f3f3] pl-2.5 text-[19px] leading-6 text-[#262626]">
            <span className="mr-7">슬라이드 1/1</span>
            <button aria-label="맞춤법 검사" className="mr-[26px]">
                <svg width="21" height="19" viewBox="0 0 21 19" fill="none" stroke={g} strokeWidth="1.200">
                    <path d="M10 18q-1-2-9-1V1q8-1 9 1.500M10 2.500Q11 0 19 1v6M10 2.500V18q1-2 9-1v-2" />
                    <path d="M12 9l3 3 5-6" strokeWidth="3" />
                </svg>
            </button>
            <button className="mr-[26px]">한국어</button>
            <button className="flex items-center gap-[5px]">
                <svg width="21" height="22" viewBox="0 0 21 22" fill="none" stroke="#555" strokeWidth="1.800">
                    <path d="M7 2a9 9 0 0 0 0 16" strokeDasharray="4 1.500" />
                    <path d="M9 1v8l-4 5M6 9h12M15 6l3 3-3 3" strokeWidth="1.600" />
                    <path d="M10 11l10 10M20 12L10 21" strokeWidth="2.600" />
                </svg>
                접근성: 조사 필요
            </button>
            <div className="ml-auto flex h-full items-center">
                <button className="mr-7 flex items-center gap-[7px]">
                    <svg width="18" height="17" viewBox="0 0 18 17" stroke="#555" strokeWidth="1.300">
                        <path d="M5 4.500L9 0l4 4.500z" fill="#555" stroke="none" />
                        <path d="M0 7.500h18M0 12h18M0 16.300h9" />
                    </svg>
                    메모
                </button>
                <button className="mr-[27px] flex items-center gap-[5px]">
                    <svg width="22" height="20" viewBox="0 0 22 20" fill="#555">
                        <path d="M2 0h18q2 0 2 2v10q0 2-2 2H10l-5 6v-6H2q-2 0-2-2V2q0-2 2-2z" />
                    </svg>
                    메모
                </button>
                <button aria-label="기본" className="flex h-full w-[60px] items-center justify-center bg-[#c6c6c6]">
                    <svg width="20" height="18" viewBox="0 0 20 18" fill="none" stroke={g} strokeWidth="1.300">
                        <path d="M.700.700h18.500v16.500H.700zM5.500.700v16.500M5.500 12h14M10 4.500h5v4h-5z" />
                    </svg>
                </button>
                <button aria-label="여러 슬라이드" className="flex h-full w-[60px] items-center justify-center">
                    <svg width="20" height="18" viewBox="0 0 20 18" fill="none" stroke={g} strokeWidth="1.300">
                        <path d="M.700.700h7.500v6.500H.700zM11.500.700H19v6.500h-7.500zM.700 10.500h7.500V17H.700zM11.500 10.500H19V17h-7.500z" />
                    </svg>
                </button>
                <button aria-label="읽기용 보기" className="flex h-full w-[60px] items-center justify-center">
                    <svg width="20" height="18" viewBox="0 0 20 18" fill="none" stroke={g} strokeWidth="1.200">
                        <path d="M10 1.500Q7 .500 .700.700v15q6.300 0 9.300 1 3-1 9.300-1V.700Q13 .500 10 1.500zM10 1v17M3 4h4.500M3 7h4.500M3 10h4.500M3 13h4.500M12.500 4H17M12.500 7H17M12.500 10H17M12.500 13H17" />
                    </svg>
                </button>
                <button aria-label="슬라이드 쇼" className="mr-[7px] flex h-full w-[60px] items-center justify-center">
                    <svg width="20" height="18" viewBox="0 0 20 18" fill="none" stroke={g} strokeWidth="1.300">
                        <path d="M0 1h20" strokeWidth="2" />
                        <path d="M2.500 1v10.500h15V1M7 5.500h6M10 12v5M6 17.300h8" />
                    </svg>
                </button>
                <button aria-label="축소" className="mr-2">
                    <svg width="12" height="12" viewBox="0 0 12 12" stroke="#444" strokeWidth="1.500"><path d="M0 5.500h12" /></svg>
                </button>
                <input
                    type="range"
                    aria-label="확대/축소"
                    defaultValue="42"
                    className="h-[17px] w-[148px] appearance-none [background:linear-gradient(#b1b1b1,#b1b1b1)_75px_50%/2px_8px_no-repeat,linear-gradient(#b1b1b1,#b1b1b1)_0_50%/100%_2px_no-repeat] [&::-webkit-slider-thumb]:h-[17px] [&::-webkit-slider-thumb]:w-2 [&::-webkit-slider-thumb]:appearance-none [&::-webkit-slider-thumb]:bg-[#666]"
                />
                <button aria-label="확대" className="mr-5 ml-2">
                    <svg width="12" height="12" viewBox="0 0 12 12" stroke="#444" strokeWidth="1.300"><path d="M0 6h12M6 0v12" /></svg>
                </button>
                <button className="mr-[33px] pt-0.5 text-[17px]">86%</button>
                <button aria-label="현재 창 크기에 맞춤" className="mr-2">
                    <svg width="16" height="16" viewBox="0 0 16 16" fill="none" stroke={g} strokeWidth="1.200">
                        <path d="M.700.700h14.600v14.600H.700z" />
                        <path d="M8 2v4M8 10v4M2 8h4M10 8h4M6.500 3.500L8 2l1.500 1.500M6.500 12.500L8 14l1.500-1.500M3.500 6.500L2 8l1.500 1.500M12.500 6.500L14 8l-1.500 1.500" />
                    </svg>
                </button>
            </div>
        </footer>
    )
}

export default function App() {
    return (
        <div className="flex min-h-screen flex-col bg-[#e6e6e6] font-['Open_Sans','Noto_Sans_CJK_KR',sans-serif]">
            <div className="bg-[#b7472a]">
                <TitleBar />
                <TabRow />
            </div>
            <Ribbon />
            <div className="flex flex-1 pb-0.5">
                <Thumbnails />
                <div className="mt-0.5 w-px bg-[#c0c0c0]" />
                <Canvas />
                <FormatPane />
            </div>
            <StatusBar />
        </div>
    )
}
